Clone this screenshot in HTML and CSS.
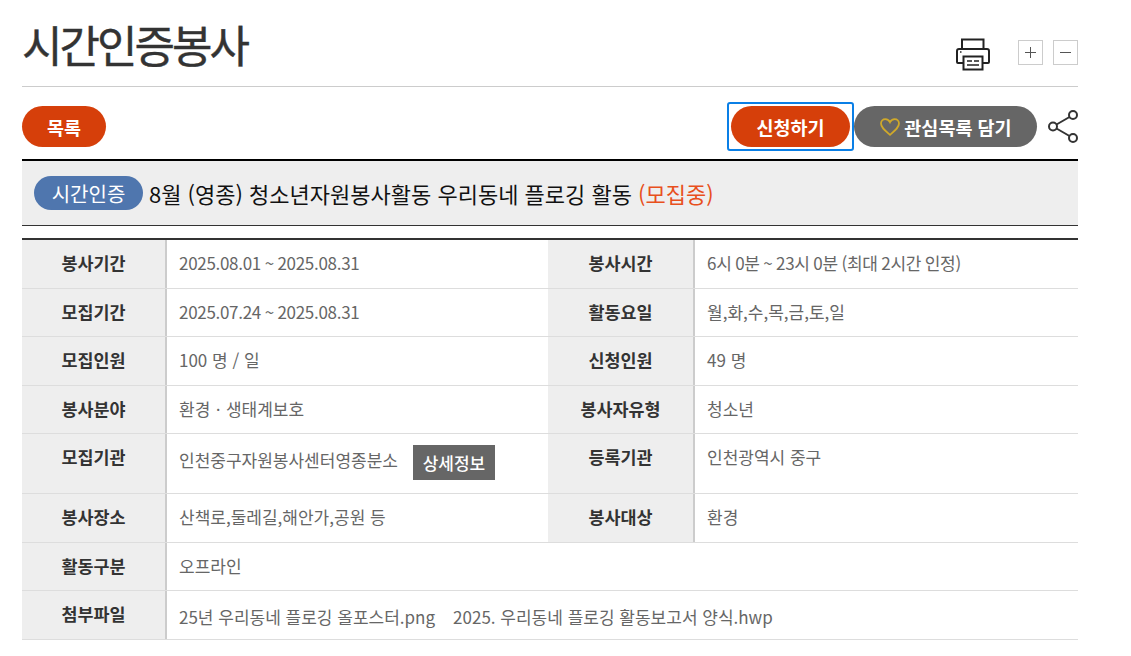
FILE: index.html
```html
<!DOCTYPE html>
<html lang="ko">
<head>
<meta charset="utf-8">
<title>시간인증봉사</title>
<link rel="stylesheet" href="styles.css">
</head>
<body>
<main class="page">
  <header class="head">
    <h1 class="title">시간인증봉사</h1>
    <div class="tools">
      <svg class="print" width="34" height="33" viewBox="0 0 34 33" fill="none" stroke="#222" stroke-width="2">
        <path d="M6 11V1.500h21.500V11"/>
        <path d="M7 25H2a1 1 0 0 1-1-1V13a2 2 0 0 1 2-2h28a2 2 0 0 1 2 2v11a1 1 0 0 1-1 1H27"/>
        <rect x="7.500" y="18.500" width="19" height="13" fill="#fff"/>
        <path d="M11 23h5M18 23h5M11 27h12" stroke-width="1.500"/>
        <path d="M4 14h1.500" stroke-width="1.500"/>
      </svg>
      <button class="zoom" type="button"><svg width="23" height="23" viewBox="0 0 23 23" stroke="#555" stroke-width="1"><path d="M11.500 6v11M6 11.500h11"/></svg></button>
      <button class="zoom" type="button"><svg width="23" height="23" viewBox="0 0 23 23" stroke="#555" stroke-width="1"><path d="M6 11.500h11"/></svg></button>
    </div>
  </header>

  <div class="actions">
    <a class="pill pill-list" href="#">목록</a>
    <div class="actions-right">
      <span class="focus"><a class="pill pill-apply" href="#">신청하기</a></span>
      <a class="pill pill-fav" href="#">
        <svg width="22" height="20" viewBox="0 0 22 20" fill="none" stroke="#d0a92a" stroke-width="1.800"><path d="M11 17.800C6 13.600 2 10.600 2 6.600 2 4 4 2.200 6.300 2.200c2 0 3.700 1 4.700 3 1-2 2.700-3 4.700-3C18 2.200 20 4 20 6.600c0 4-4 7-9 11.200z"/></svg>
        관심목록 담기
      </a>
      <svg class="share" width="30" height="33" viewBox="0 0 30 33" fill="none" stroke="#333" stroke-width="2">
        <circle cx="5" cy="16.500" r="4"/><circle cx="25" cy="5" r="4"/><circle cx="25" cy="28" r="4"/>
        <path d="M8.500 14.500L21.500 7M8.500 18.500L21.500 26"/>
      </svg>
    </div>
  </div>

  <div class="subject">
    <span class="badge">시간인증</span>
    <span class="subject-text">8월 (영종) 청소년자원봉사활동 우리동네 플로깅 활동 <em class="status">(모집중)</em></span>
  </div>

  <section class="info">
    <div class="row">
      <div class="th">봉사기간</div><div class="td td-l lat">2025.08.01 ~ 2025.08.31</div>
      <div class="th th-r">봉사시간</div><div class="td lat">6시 0분 ~ 23시 0분 (최대 2시간 인정)</div>
    </div>
    <div class="row">
      <div class="th">모집기간</div><div class="td td-l lat">2025.07.24 ~ 2025.08.31</div>
      <div class="th th-r">활동요일</div><div class="td">월,화,수,목,금,토,일</div>
    </div>
    <div class="row">
      <div class="th">모집인원</div><div class="td td-l">100 명 / 일</div>
      <div class="th th-r">신청인원</div><div class="td">49 명</div>
    </div>
    <div class="row">
      <div class="th">봉사분야</div><div class="td td-l">환경ㆍ생태계보호</div>
      <div class="th th-r">봉사자유형</div><div class="td">청소년</div>
    </div>
    <div class="row row-tall">
      <div class="th">모집기관</div><div class="td td-l">인천중구자원봉사센터영종분소<a class="detail" href="#">상세정보</a></div>
      <div class="th th-r">등록기관</div><div class="td">인천광역시 중구</div>
    </div>
    <div class="row">
      <div class="th">봉사장소</div><div class="td td-l">산책로,둘레길,해안가,공원 등</div>
      <div class="th th-r">봉사대상</div><div class="td">환경</div>
    </div>
    <div class="row">
      <div class="th">활동구분</div><div class="td td-wide">오프라인</div>
    </div>
    <div class="row">
      <div class="th th-file">첨부파일</div><div class="td td-wide td-file"><a href="#">25년 우리동네 플로깅 올포스터.png</a><a href="#">2025. 우리동네 플로깅 활동보고서 양식.hwp</a></div>
    </div>
  </section>
</main>
</body>
</html>
```
FILE: styles.css
```css
* { box-sizing: border-box; }
html, body { margin: 0; padding: 0; background: #fff; }
body { font-family: "Noto Sans CJK KR", "Noto Sans", sans-serif; color: #333; overflow: hidden; }
a { color: inherit; text-decoration: none; }
.page { width: 1056px; margin-left: 22px; }

.head { height: 87px; border-bottom: 1px solid #ccc; display: flex; justify-content: space-between; }
.title { margin: 0; padding-top: 12px; font-size: 44px; line-height: 64px; font-weight: 400; letter-spacing: -3px; color: #333; -webkit-text-stroke: 0.4px #333; }
.tools { display: flex; align-items: flex-start; padding-top: 38px; }
.print { margin-right: 28px; }
.zoom { width: 25px; height: 25px; padding: 0; margin: 2px 0 0 10px; border: 1px solid #ccc; background: #fff; display: block; }
.zoom:first-of-type { margin-left: 0; }
.zoom svg { display: block; }

.actions { height: 74px; padding-top: 19px; border-bottom: 2px solid #000; display: flex; justify-content: space-between; align-items: flex-start; }
.actions-right { display: flex; align-items: flex-start; margin-top: -4px; }
.pill { height: 41px; border-radius: 21px; display: flex; align-items: center; justify-content: center; color: #fff; font-size: 18.500px; font-weight: 700; }
.pill-list { width: 84px; background: #d63f0a; }
.focus { display: block; width: 127px; height: 49px; padding: 2px; border: 2px solid #0a7fe6; border-radius: 3px; }
.pill-apply { width: 119px; background: #d63f0a; }
.pill-fav { width: 183px; margin-top: 4px; background: #666; gap: 3px; }
.share { margin: 8px 0 0 11px; }

.subject { height: 65px; border-bottom: 1px solid #333; background: #eee; display: flex; align-items: center; padding-left: 12px; }
.badge { width: 109px; height: 34px; border-radius: 17px; background: #4f76ae; color: #fff; font-size: 20px; display: flex; align-items: center; justify-content: center; }
.subject-text { margin-left: 6px; font-size: 22px; color: #111; }
.status { font-style: normal; color: #e8501d; }

.info { margin-top: 12px; border-top: 2px solid #333; }
.row { display: flex; height: 48.500px; border-bottom: 1px solid #ddd; font-size: 17px; line-height: 24px; }
.row-tall { height: 60px; }
.th { width: 145px; padding-top: 11px; background: #eee; border-right: 2px solid #ccc; text-align: center; font-weight: 700; color: #333; font-size: 17.400px; }
.th-r { width: 147px; }
.td { flex: 1; padding: 11px 0 0 12px; color: #666; font-size: 17px; }
.td-l { flex: none; width: 381px; }
.td-wide { flex: 1; }
.lat { letter-spacing: -0.3px; word-spacing: -0.8px; }
.th-file { padding-top: 11px; }
.td-file { padding-top: 14px; }
.td-file a + a { margin-left: 18px; }
.detail { display: inline-block; width: 82px; height: 35px; margin-left: 15px; background: #666; color: #fff; font-weight: 500; line-height: 35px; text-align: center; vertical-align: middle; }
```
